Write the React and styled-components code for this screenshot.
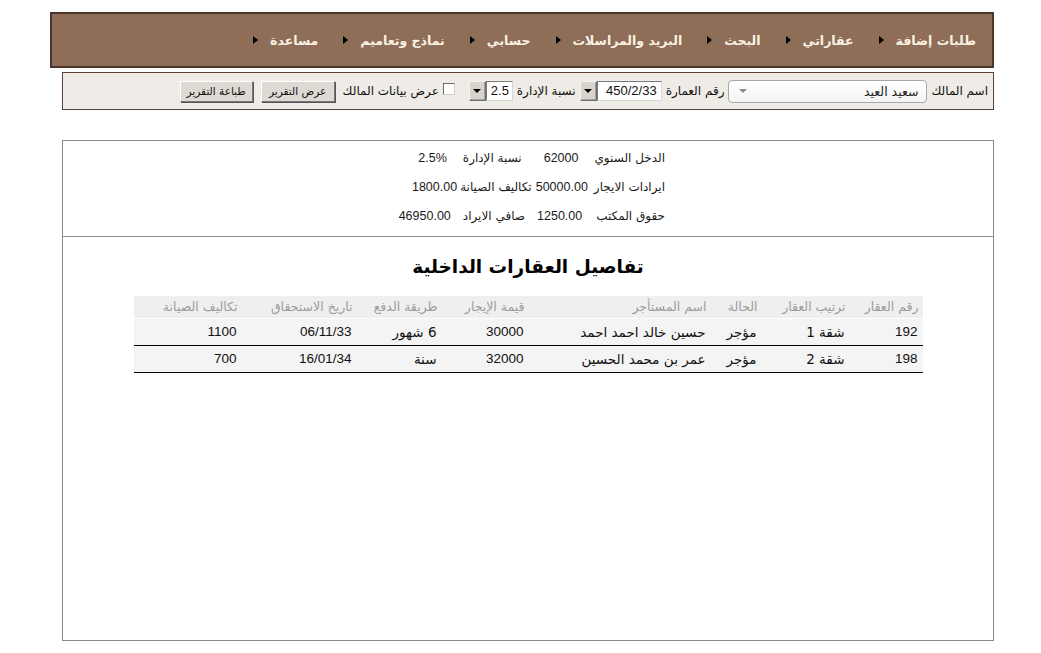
import React from "react";
import styled, { createGlobalStyle } from "styled-components";

const GlobalStyle = createGlobalStyle`
  html, body { margin: 0; padding: 0; background: #ffffff; }
  body { font-family: "Liberation Sans", "DejaVu Sans", sans-serif; color: #111; }
  * { box-sizing: border-box; }
`;

const Page = styled.div`
  width: 944px;
  margin-left: 50px;
  padding-top: 12px;
  direction: rtl;
  display: flex;
  flex-direction: column;
  align-items: flex-start;
`;

const NavBar = styled.nav`
  width: 944px;
  height: 56px;
  border: 2px solid #4b3428;
  background: #8e6d59;
  display: flex;
  align-items: center;
  gap: 25px;
  padding: 0 16px 0 0;
`;

const NavItem = styled.a`
  display: flex;
  align-items: center;
  gap: 12px;
  color: #fbf1e2;
  font-family: "DejaVu Sans", sans-serif;
  font-weight: bold;
  font-size: 12.5px;
  text-decoration: none;
  white-space: nowrap;
`;

const Arrow = styled.span`
  width: 0;
  height: 0;
  border-top: 4px solid transparent;
  border-bottom: 4px solid transparent;
  border-left: 5px solid #000;
`;

const FilterBar = styled.div`
  margin-top: 4px;
  width: 932px;
  height: 38px;
  border: 1px solid #5a4236;
  background: #efebe6;
  display: flex;
  align-items: center;
  gap: 4px;
  padding: 0 5px;
  font-size: 12px;
`;

const Label = styled.span`
  font-family: "DejaVu Sans", sans-serif;
  font-size: 12px;
  white-space: nowrap;
  margin-right: ${(p) => p.$before || 0}px;
`;

const SelectBox = styled.div`
  width: 199px;
  height: 23px;
  border: 1px solid #a8a8a8;
  border-radius: 4px;
  background: linear-gradient(#ffffff, #f4f4f4);
  display: flex;
  align-items: center;
  justify-content: space-between;
  padding: 0 8px 0 10px;
  font-family: "DejaVu Sans", sans-serif;
  font-size: 12.5px;
  color: #222;
`;

const SelectCaret = styled.span`
  width: 0;
  height: 0;
  border-left: 4px solid transparent;
  border-right: 4px solid transparent;
  border-top: 4px solid #8a8a8a;
`;

const Combo = styled.div`
  display: flex;
  align-items: center;
  height: 20px;
  margin-right: ${(p) => p.$before || 0}px;
`;

const ComboInput = styled.div`
  width: ${(p) => p.$w}px;
  height: 20px;
  background: #fff;
  border: 1px solid #7a7a7a;
  border-right-color: #d8d8d8;
  border-bottom-color: #d8d8d8;
  font-family: "Liberation Sans", sans-serif;
  font-size: 13px;
  line-height: 18px;
  padding: 0 4px;
  text-align: right;
  direction: ltr;
`;

const ComboButton = styled.div`
  width: 17px;
  height: 20px;
  background: #d8d4cc;
  border: 1px solid #6f6f6f;
  border-top-color: #f4f4f4;
  border-left-color: #f4f4f4;
  box-shadow: inset -1px -1px 0 #a0a0a0;
  display: flex;
  align-items: center;
  justify-content: center;
  &::after {
    content: "";
    border-left: 4px solid transparent;
    border-right: 4px solid transparent;
    border-top: 4px solid #000;
  }
`;

const Check = styled.span`
  width: 12px;
  height: 12px;
  background: #fff;
  border: 1px solid #6b6b6b;
  border-right-color: #cfcfcf;
  border-bottom-color: #cfcfcf;
  margin-right: ${(p) => p.$before || 0}px;
  margin-bottom: 4px;
`;

const Button = styled.button`
  height: 21px;
  width: ${(p) => p.$w}px;
  padding: 0;
  background: #dedad3;
  border: 1px solid #777;
  border-top-color: #ffffff;
  border-left-color: #ffffff;
  box-shadow: 1px 1px 0 #555;
  font-family: "DejaVu Sans", sans-serif;
  font-size: 10.5px;
  color: #111;
  margin-right: ${(p) => p.$before || 0}px;
`;

const Report = styled.section`
  margin-top: 30px;
  width: 932px;
  height: 501px;
  border: 1px solid #888;
  background: #fff;
`;

const Summary = styled.div`
  height: 96px;
  border-bottom: 1px solid #8f8f8f;
  padding: 6px 328px 0 0;
  display: flex;
  flex-direction: column;
  gap: 7px;
  font-size: 12px;
`;

const SummaryLine = styled.div`
  display: flex;
  align-items: center;
  height: 22px;
`;

const SumText = styled.span`
  font-family: ${(p) => (p.$num ? '"Liberation Sans", sans-serif' : '"DejaVu Sans", sans-serif')};
  font-size: ${(p) => (p.$num ? "12.5px" : "12px")};
  color: #1a1a1a;
  margin-right: ${(p) => p.$before || 0}px;
  white-space: nowrap;
`;

const Title = styled.h2`
  margin: 17px 0 16px;
  text-align: center;
  font-family: "DejaVu Sans", sans-serif;
  font-size: 18.5px;
  font-weight: bold;
  line-height: 26px;
  color: #000;
`;

const TableWrap = styled.div`
  width: 789px;
  margin: 0 auto;
  overflow: hidden;
`;

const Table = styled.table`
  width: 789px;
  border-collapse: collapse;
  table-layout: fixed;
`;

const HeadRow = styled.tr`
  background: #efefef;
  border-bottom: 1px solid #fff;
`;

const HeadCell = styled.th`
  height: 22px;
  color: #9c9c9c;
  font-family: "DejaVu Sans", sans-serif;
  font-size: 12.5px;
  font-weight: normal;
  text-align: right;
  padding: 0 4px 0 0;
  white-space: nowrap;
  overflow: hidden;
`;

const Row = styled.tr`
  background: #f4f4f4;
  border-bottom: 1px solid #000;
`;

const Cell = styled.td`
  height: 27px;
  font-family: ${(p) => (p.$num ? '"Liberation Sans", sans-serif' : '"DejaVu Sans", sans-serif')};
  font-size: 13.5px;
  color: #111;
  text-align: right;
  padding: 0 5px 0 0;
  white-space: nowrap;
  overflow: hidden;
`;

const navItems = [
  "طلبات إضافة",
  "عقاراتي",
  "البحث",
  "البريد والمراسلات",
  "حسابي",
  "نماذج وتعاميم",
  "مساعدة",
];

const columns = [
  { t: "رقم العقار", w: 73 },
  { t: "ترتيب العقار", w: 88 },
  { t: "الحالة", w: 51 },
  { t: "اسم المستأجر", w: 182 },
  { t: "قيمة الإيجار", w: 87 },
  { t: "طريقة الدفع", w: 85 },
  { t: "تاريخ الاستحقاق", w: 115 },
  { t: "تكاليف الصيانة", w: 108 },
];

const rows = [
  ["192", "شقة 1", "مؤجر", "حسين خالد احمد احمد", "30000", "6 شهور", "06/11/33", "1100"],
  ["198", "شقة 2", "مؤجر", "عمر بن محمد الحسين", "32000", "سنة", "16/01/34", "700"],
];

const numericCols = [0, 4, 6, 7];

const summary = [
  [
    { t: "الدخل السنوي" },
    { t: "62000", num: true, b: 16 },
    { t: "نسبة الإدارة", b: 22 },
    { t: "2.5%", num: true, b: 16 },
  ],
  [
    { t: "ايرادات الايجار" },
    { t: "50000.00", num: true, b: 6 },
    { t: "تكاليف الصيانة", b: 4 },
    { t: "1800.00", num: true, b: 3 },
  ],
  [
    { t: "حقوق المكتب" },
    { t: "1250.00", num: true, b: 14 },
    { t: "صافي الايراد", b: 12 },
    { t: "46950.00", num: true, b: 12 },
  ],
];

export default function App() {
  return (
    <>
      <GlobalStyle />
      <Page>
        <NavBar>
          {navItems.map((n) => (
            <NavItem key={n} href="#">
              {n}
              <Arrow />
            </NavItem>
          ))}
        </NavBar>

        <FilterBar>
          <Label>اسم المالك</Label>
          <SelectBox>
            <span>سعيد العيد</span>
            <SelectCaret />
          </SelectBox>
          <Label>رقم العمارة</Label>
          <Combo>
            <ComboInput $w={65}>450/2/33</ComboInput>
            <ComboButton />
          </Combo>
          <Label>نسبة الإدارة</Label>
          <Combo>
            <ComboInput $w={27}>2.5</ComboInput>
            <ComboButton />
          </Combo>
          <Check $before={10} />
          <Label>عرض بيانات المالك</Label>
          <Button $w={74} $before={4}>عرض التقرير</Button>
          <Button $w={73} $before={4}>طباعة التقرير</Button>
        </FilterBar>

        <Report>
          <Summary>
            {summary.map((line, i) => (
              <SummaryLine key={i}>
                {line.map((s, j) => (
                  <SumText key={j} $num={s.num} $before={s.b}>
                    {s.t}
                  </SumText>
                ))}
              </SummaryLine>
            ))}
          </Summary>

          <Title>تفاصيل العقارات الداخلية</Title>

          <TableWrap>
            <Table>
              <colgroup>
                {columns.map((c) => (
                  <col key={c.t} style={{ width: c.w }} />
                ))}
              </colgroup>
              <thead>
                <HeadRow>
                  {columns.map((c) => (
                    <HeadCell key={c.t}>{c.t}</HeadCell>
                  ))}
                </HeadRow>
              </thead>
              <tbody>
                {rows.map((r, i) => (
                  <Row key={i}>
                    {r.map((v, j) => (
                      <Cell key={j} $num={numericCols.includes(j)}>
                        {v}
                      </Cell>
                    ))}
                  </Row>
                ))}
              </tbody>
            </Table>
          </TableWrap>
        </Report>
      </Page>
    </>
  );
}
